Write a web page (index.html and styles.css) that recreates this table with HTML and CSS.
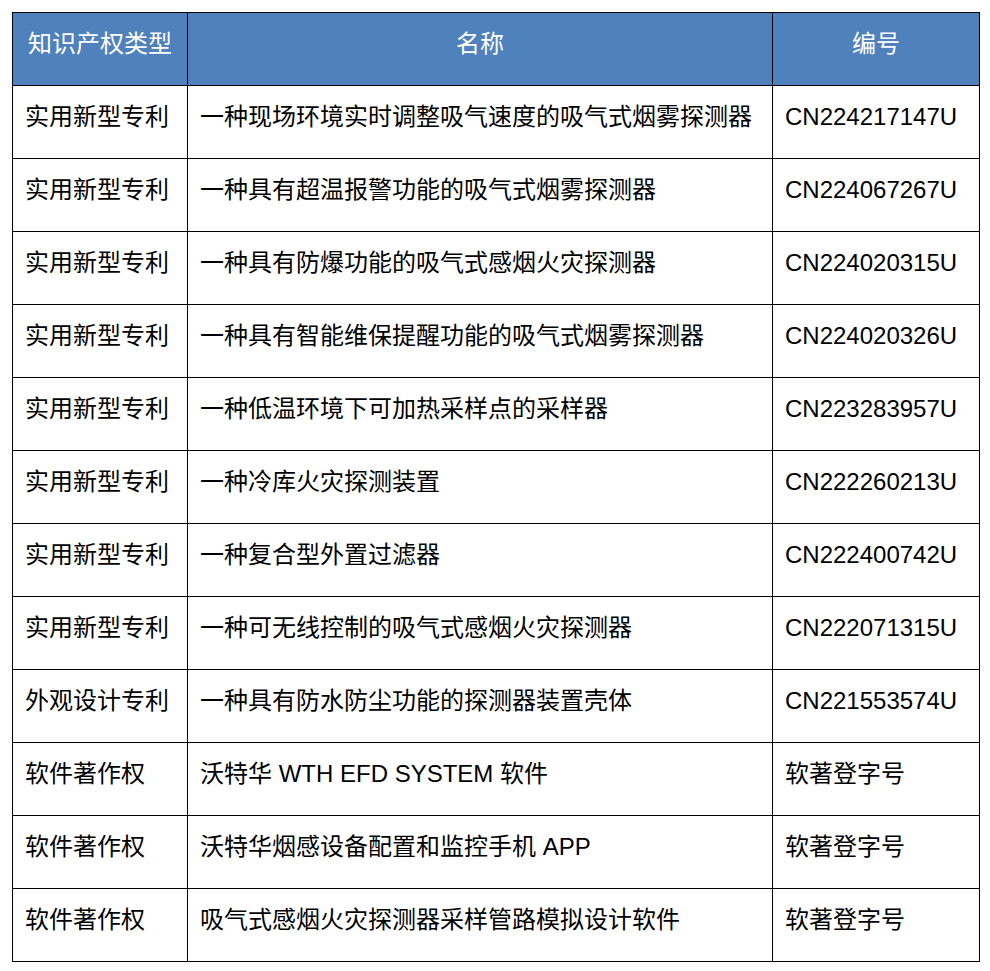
FILE: index.html
```html
<!DOCTYPE html>
<html lang="zh-CN">
<head>
<meta charset="utf-8">
<title>知识产权</title>
<link rel="stylesheet" href="styles.css">
</head>
<body>
<table class="ip-table">
  <colgroup>
    <col class="c-type">
    <col class="c-name">
    <col class="c-no">
  </colgroup>
  <thead>
    <tr>
      <th><div class="cell">知识产权类型</div></th>
      <th><div class="cell">名称</div></th>
      <th><div class="cell">编号</div></th>
    </tr>
  </thead>
  <tbody>
    <tr><td><div class="cell">实用新型专利</div></td><td><div class="cell">一种现场环境实时调整吸气速度的吸气式烟雾探测器</div></td><td><div class="cell">CN224217147U</div></td></tr>
    <tr><td><div class="cell">实用新型专利</div></td><td><div class="cell">一种具有超温报警功能的吸气式烟雾探测器</div></td><td><div class="cell">CN224067267U</div></td></tr>
    <tr><td><div class="cell">实用新型专利</div></td><td><div class="cell">一种具有防爆功能的吸气式感烟火灾探测器</div></td><td><div class="cell">CN224020315U</div></td></tr>
    <tr><td><div class="cell">实用新型专利</div></td><td><div class="cell">一种具有智能维保提醒功能的吸气式烟雾探测器</div></td><td><div class="cell">CN224020326U</div></td></tr>
    <tr><td><div class="cell">实用新型专利</div></td><td><div class="cell">一种低温环境下可加热采样点的采样器</div></td><td><div class="cell">CN223283957U</div></td></tr>
    <tr><td><div class="cell">实用新型专利</div></td><td><div class="cell">一种冷库火灾探测装置</div></td><td><div class="cell">CN222260213U</div></td></tr>
    <tr><td><div class="cell">实用新型专利</div></td><td><div class="cell">一种复合型外置过滤器</div></td><td><div class="cell">CN222400742U</div></td></tr>
    <tr><td><div class="cell">实用新型专利</div></td><td><div class="cell">一种可无线控制的吸气式感烟火灾探测器</div></td><td><div class="cell">CN222071315U</div></td></tr>
    <tr><td><div class="cell">外观设计专利</div></td><td><div class="cell">一种具有防水防尘功能的探测器装置壳体</div></td><td><div class="cell">CN221553574U</div></td></tr>
    <tr><td><div class="cell">软件著作权</div></td><td><div class="cell">沃特华 WTH EFD SYSTEM 软件</div></td><td><div class="cell">软著登字号</div></td></tr>
    <tr><td><div class="cell">软件著作权</div></td><td><div class="cell">沃特华烟感设备配置和监控手机 APP</div></td><td><div class="cell">软著登字号</div></td></tr>
    <tr><td><div class="cell">软件著作权</div></td><td><div class="cell">吸气式感烟火灾探测器采样管路模拟设计软件</div></td><td><div class="cell">软著登字号</div></td></tr>
  </tbody>
</table>
</body>
</html>
```

FILE: styles.css
```css
html, body {
  margin: 0;
  padding: 0;
  background: #ffffff;
}

body {
  padding: 12px 0 0 12px;
  font-family: "Liberation Sans", "Noto Sans CJK SC", sans-serif;
  font-size: 24px;
  color: #000000;
}

.ip-table {
  border-collapse: collapse;
  table-layout: fixed;
  width: 967px;
}

.c-type { width: 175px; }
.c-name { width: 585px; }
.c-no { width: 207px; }

.ip-table th,
.ip-table td {
  border: 1px solid #000000;
  padding: 0;
  vertical-align: top;
}

.ip-table th {
  background: #4f81bd;
  color: #ffffff;
  font-weight: normal;
  text-align: center;
}

.ip-table td {
  text-align: left;
}

.cell {
  box-sizing: border-box;
  height: 72px;
  padding: 17px 12px 0 12px;
  line-height: 28px;
  white-space: nowrap;
}
```
